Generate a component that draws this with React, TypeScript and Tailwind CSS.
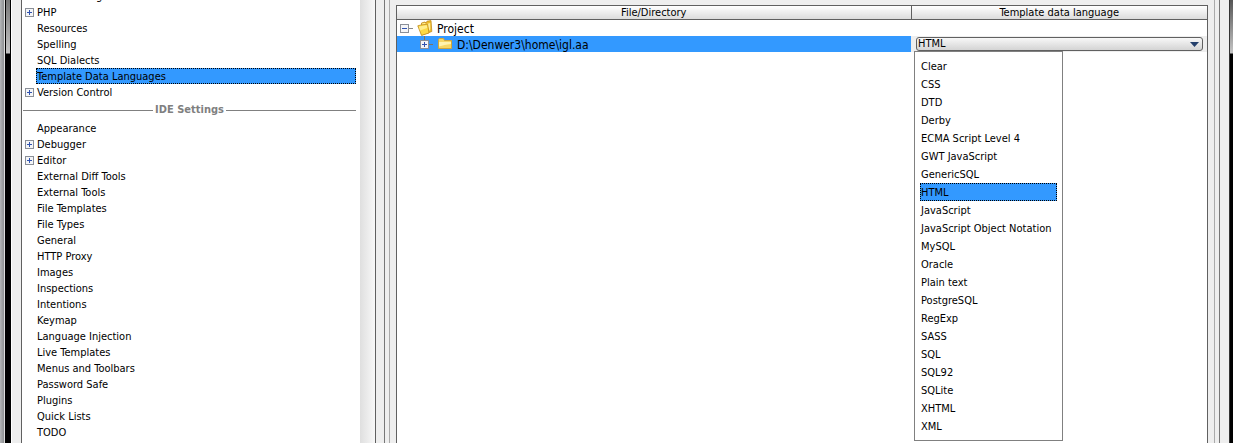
import { useState } from "react";

interface TreeItem {
  name: string;
  expandable?: boolean;
}

const projectSettings: TreeItem[] = [
  { name: "File Encodings" },
  { name: "PHP", expandable: true },
  { name: "Resources" },
  { name: "Spelling" },
  { name: "SQL Dialects" },
  { name: "Template Data Languages" },
  { name: "Version Control", expandable: true },
];

const ideSettings: TreeItem[] = [
  { name: "Appearance" },
  { name: "Debugger", expandable: true },
  { name: "Editor", expandable: true },
  { name: "External Diff Tools" },
  { name: "External Tools" },
  { name: "File Templates" },
  { name: "File Types" },
  { name: "General" },
  { name: "HTTP Proxy" },
  { name: "Images" },
  { name: "Inspections" },
  { name: "Intentions" },
  { name: "Keymap" },
  { name: "Language Injection" },
  { name: "Live Templates" },
  { name: "Menus and Toolbars" },
  { name: "Password Safe" },
  { name: "Plugins" },
  { name: "Quick Lists" },
  { name: "TODO" },
];

const languages = [
  "Clear", "CSS", "DTD", "Derby", "ECMA Script Level 4", "GWT JavaScript", "GenericSQL",
  "HTML", "JavaScript", "JavaScript Object Notation", "MySQL", "Oracle", "Plain text",
  "PostgreSQL", "RegExp", "SASS", "SQL", "SQL92", "SQLite", "XHTML", "XML",
];

function Expander({ open = false }: { open?: boolean }) {
  return (
    <svg width="9" height="9" viewBox="0 0 9 9" shapeRendering="crispEdges" className="shrink-0">
      <rect width="9" height="9" fill="#8a8f98" />
      <rect x="1" y="1" width="7" height="7" fill="#f4f5f7" />
      <rect x="2" y="4" width="5" height="1" fill="#2f52b0" />
      {!open && <rect x="4" y="2" width="1" height="5" fill="#2f52b0" />}
    </svg>
  );
}

function ProjectIcon() {
  return (
    <svg width="16" height="16" viewBox="0 0 16 16" className="shrink-0">
      <path d="M4.5 3 8 2 9 3 10 1.2 14 .6 14.8 11.5 5 15Z" fill="#f0bd2c" stroke="#c08a1a" strokeWidth=".8" />
      <path d="M5 3.6 8 3 9 4.2 13.2 3V9L12 11 10.5 4.5 5 5.5Z" fill="#fff0a0" />
      <path d="M.8 5.8 3.8 5 10.6 4.2 12 13 4.5 15.4Z" fill="#fcd944" stroke="#c08a1a" strokeWidth=".8" />
      <path d="M2 6.6 9.8 5.2 10.2 8 3 10.5Z" fill="#ffee8e" />
    </svg>
  );
}

function FolderIcon() {
  return (
    <svg width="16" height="16" viewBox="0 0 16 16" className="shrink-0">
      <path d="M1.5 3.5 2.5 2.5H6.5L7.5 4.5H14.5V12.5H1.5Z" fill="#f6d765" stroke="#cfa53c" />
      <path d="M2 6H14V8C9 8.5 6 9.5 2 10.5Z" fill="#fff3ae" />
    </svg>
  );
}

interface SettingsListProps {
  items: TreeItem[];
  selected: string;
  onSelect: (name: string) => void;
}

function SettingsList({ items, selected, onSelect }: SettingsListProps) {
  return (
    <ul>
      {items.map((item) => (
        <li key={item.name} className="flex h-4 items-center pr-1">
          <span className="flex w-3.5 shrink-0 pl-[3px]">{item.expandable && <Expander />}</span>
          <button
            type="button"
            onClick={() => onSelect(item.name)}
            className={`h-4 flex-1 border border-dotted text-left leading-4 whitespace-nowrap ${
              item.name === selected ? "border-black bg-[#3399ff]" : "border-transparent"
            }`}
          >
            {item.name}
          </button>
        </li>
      ))}
    </ul>
  );
}

export default function App() {
  const [page, setPage] = useState("Template Data Languages");
  const [language, setLanguage] = useState("HTML");
  const [isOpen, setIsOpen] = useState(true);

  return (
    <div className="flex min-h-screen bg-[#eeeeee] font-['DejaVu_Sans_Condensed','DejaVu_Sans',sans-serif] text-[11px] text-black">
      {/* Left window frame */}
      <div className="w-1 shrink-0 bg-linear-to-r from-[#b4b6b8] to-[#8e9092]" />
      <div className="w-px shrink-0 bg-[#dddddd]" />
      <div className="w-1.5 shrink-0 border-x border-black bg-[linear-gradient(#777777,#c4c4c4_53px,#000000_54px)]" />
      <div className="w-px shrink-0 bg-white" />

      {/* Settings tree */}
      <nav className="ml-[9px] flex w-[355px] shrink-0 border-r border-l border-[#606060] bg-white">
        <div className="min-w-0 flex-1 overflow-hidden">
          <div className="-mt-3">
            <SettingsList items={projectSettings} selected={page} onSelect={setPage} />
            <div className="flex h-5 items-center gap-0.5 pr-1 pl-px font-bold text-[#808080]">
              <span className="h-px flex-1 bg-[#808080]" />
              <h2>IDE Settings</h2>
              <span className="h-px flex-1 bg-[#808080]" />
            </div>
            <SettingsList items={ideSettings} selected={page} onSelect={setPage} />
          </div>
        </div>
        <div className="w-[15px] shrink-0 bg-linear-to-r from-[#dfdfdf] to-[#f8f8f8]" />
      </nav>

      {/* Splitter */}
      <div className="ml-2 w-px shrink-0 bg-[#777777]" />
      <div className="ml-1 w-px shrink-0 bg-[#aaaaaa]" />

      {/* Template languages table */}
      <main className="ml-1.5 flex min-w-0 flex-1 flex-col pt-[5px]">
        <div className="flex-1 border-t border-r border-l border-[#606060] bg-white">
          <table className="w-full table-fixed border-collapse">
            <thead>
              <tr className="h-[13px] border-b border-[#606060] bg-linear-to-b from-white to-[#dcdcdc]">
                <th className="border-r border-[#606060] p-0 leading-[13px] font-normal">File/Directory</th>
                <th className="w-[296px] p-0 leading-[13px] font-normal">Template data language</th>
              </tr>
            </thead>
            <tbody>
              <tr className="h-4">
                <td className="p-0">
                  <div className="flex h-4 items-center pl-[3px]">
                    <Expander open />
                    <span className="mr-1 h-px w-1 bg-[#888888]" />
                    <ProjectIcon />
                    <span className="pt-0.5 pl-1 text-xs leading-3.5">Project</span>
                  </div>
                </td>
                <td className="p-0" />
              </tr>
              <tr className="h-4">
                <td className="bg-[#3399ff] p-0">
                  <div className="flex h-4 items-center pl-[23px]">
                    <span className="flex h-4 flex-col items-center">
                      <span className="h-1 w-px bg-[#7a7468]" />
                      <Expander />
                    </span>
                    <span className="mr-1 h-px w-1 bg-[#7a7468]" />
                    <FolderIcon />
                    <span className="pt-0.5 pl-1 text-xs leading-3.5">D:\Denwer3\home\igl.aa</span>
                  </div>
                </td>
                <td className="p-0">
                  <div className="relative h-4 bg-[#eeeeee] pt-px pr-1 pl-[5px]">
                    <select
                      aria-label="Template data language"
                      value={language}
                      onChange={(e) => setLanguage(e.target.value)}
                      onMouseDown={(e) => {
                        e.preventDefault();
                        setIsOpen(!isOpen);
                      }}
                      className="block h-3.5 w-full appearance-none rounded-[3px] border border-[#606060] bg-linear-to-b from-[#f8f8f8] to-[#d4d4d4] pl-px leading-3 outline-none"
                    >
                      {languages.map((l) => (
                        <option key={l}>{l}</option>
                      ))}
                    </select>
                    <svg width="9" height="5" viewBox="0 0 9 5" className="pointer-events-none absolute top-1.5 right-2">
                      <path d="M0 0H9L4.5 5Z" fill="#243f6b" />
                    </svg>
                    {isOpen && (
                      <ul role="listbox" className="absolute top-[15px] left-[3px] z-10 w-[149px] border border-[#808080] bg-white p-[5px]">
                        {languages.map((l) => (
                          <li key={l} role="option" aria-selected={l === language}>
                            <button
                              type="button"
                              onClick={() => {
                                setLanguage(l);
                                setIsOpen(false);
                              }}
                              className={`block h-[18px] w-full border border-dotted text-left leading-[18px] whitespace-nowrap ${
                                l === language ? "border-black bg-[#3399ff]" : "border-transparent"
                              }`}
                            >
                              {l}
                            </button>
                          </li>
                        ))}
                      </ul>
                    )}
                  </div>
                </td>
              </tr>
            </tbody>
          </table>
        </div>
      </main>

      {/* Right window frame */}
      <div className="ml-1.5 w-px shrink-0 bg-[#aaaaaa]" />
      <div className="ml-1 w-px shrink-0 bg-[#777777]" />
      <div className="ml-[9px] w-px shrink-0 bg-[#333333]" />
      <div className="w-[3px] shrink-0 bg-[linear-gradient(#555555,#c4c4c4_53px,#000000_54px)]" />
    </div>
  );
}
